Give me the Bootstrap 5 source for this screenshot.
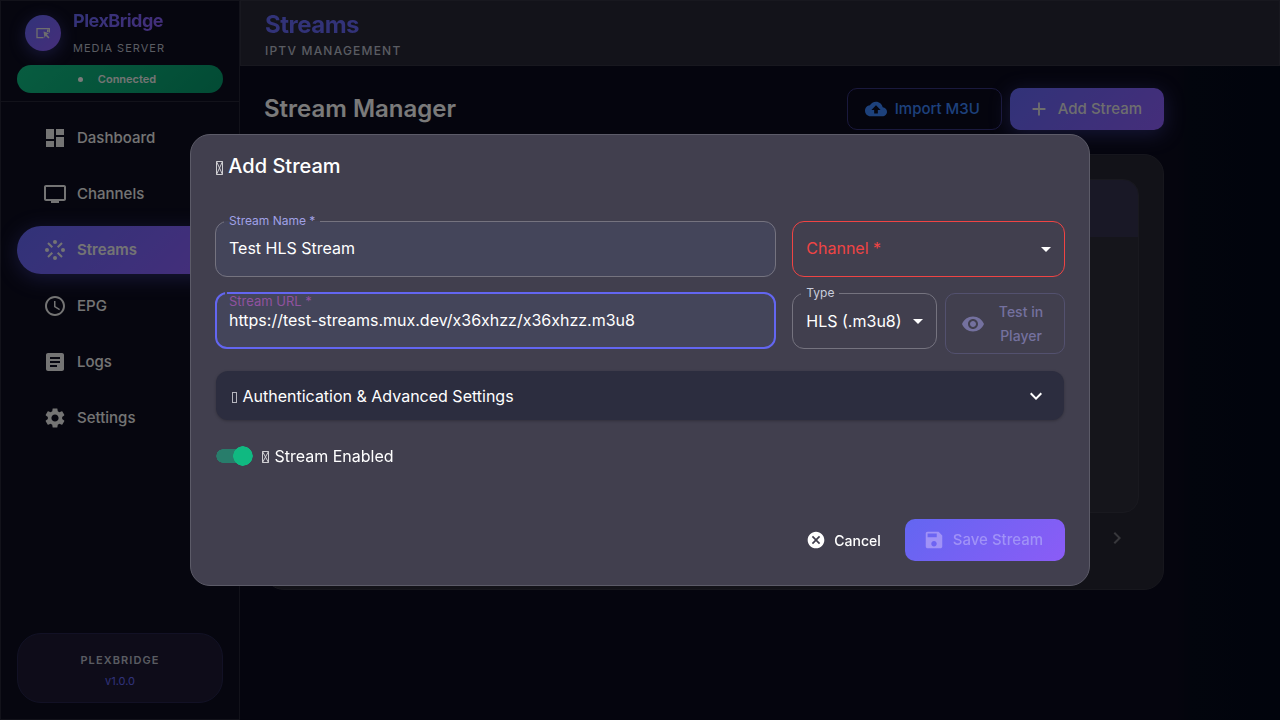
<!DOCTYPE html>
<html lang="en">
<head>
<meta charset="utf-8">
<meta name="viewport" content="width=device-width, initial-scale=1">
<title>PlexBridge – Streams</title>
<link href="https://cdn.jsdelivr.net/npm/bootstrap@5.3.0/dist/css/bootstrap.min.css" rel="stylesheet">
<style>
:root { --pb-indigo: #6366f1; --pb-violet: #8b5cf6; --pb-grad: linear-gradient(135deg, #6366f1 0%, #8b5cf6 100%); --pb-line: rgba(255,255,255,.1); }
body { font-family: Inter, "Liberation Sans", sans-serif; font-size: 16px; line-height: 24px; color: #fff; background: linear-gradient(90deg, #0a0a1c 0%, #0a0a1c 92%, #050a1a 93%, #020819 100%); min-height: 100vh; overflow: hidden; }
svg { fill: currentColor; flex: none; }
.ico { width: 24px; height: 24px; }
.ico-md { width: 22px; height: 22px; }
.ico-sm { width: 20px; height: 20px; }
.glyph-x { width: 8px; height: 14px; fill: none; stroke: currentColor; stroke-width: 1; opacity: .75; vertical-align: -2px; }
.glyph-box { display: inline-block; width: 5px; height: 11px; border: 1px solid #b5b5bd; vertical-align: -1px; margin-right: 1px; }

.side { width: 240px; min-height: 100vh; background: #0c0c1e; border: 1px solid var(--pb-line); }
.brand-box { padding: 8px 16px; border-bottom: 1px solid var(--pb-line); }
.brand-logo { width: 36px; height: 36px; background: var(--pb-grad); box-shadow: 0 4px 16px rgba(99,102,241,.4); color: #ddd; }
.brand-logo svg { width: 16px; height: 16px; }
.brand-name { font-size: 18px; font-weight: 700; line-height: 24px; letter-spacing: -.5px; }
.grad-text { background: var(--pb-grad); -webkit-background-clip: text; background-clip: text; color: transparent; }
.brand-sub { font-size: 11px; font-weight: 400; line-height: 16px; letter-spacing: 1px; color: #b4b8c4; margin-top: 7px; margin-bottom: 1px; }
.state-chip { height: 28px; border-radius: 14px; padding-right: 6px; font-size: 11px; font-weight: 600; background: linear-gradient(135deg, #10b981, #059669); color: #e8e8e8; gap: 15px; }
.state-dot { width: 5px; height: 5px; border-radius: 50%; background: #f4f4f4; }
.side-link { height: 48px; border-radius: 24px; padding: 0 26px; gap: 10px; font-size: 15px; font-weight: 500; color: #e8e8e8; text-decoration: none; }
.side-link.on { background: var(--pb-grad); box-shadow: 0 4px 20px rgba(99,102,241,.4); font-weight: 600; }
.ver-box { height: 70px; border-radius: 24px; padding-top: 5px; background: #1c1933; border: 1px solid #24234a; line-height: 21px; }
.ver-name { font-size: 11px; font-weight: 600; letter-spacing: .1em; color: #b4b8c4; }
.ver-num { font-size: 11px; color: var(--pb-indigo); }

.top-bar { height: 66px; padding: 9px 24px; background: #262634; border: 1px solid #31313f; }
.top-title { font-size: 24px; font-weight: 700; line-height: 30px; letter-spacing: -.5px; background: linear-gradient(135deg, #6366f1, #8b5cf6 1200px); -webkit-background-clip: text; background-clip: text; }
.top-sub { font-size: 12px; font-weight: 500; line-height: 22px; letter-spacing: .1em; color: #b4b8c4; }
.work { max-width: 948px; padding: 22px 24px; }
.work h2 { font-size: 24px; font-weight: 600; color: #f4f4f4; }
.pb-btn { height: 42px; border-radius: 10px; padding: 0 22px 0 18px; gap: 8px; font-size: 15px; font-weight: 500; display: inline-flex; align-items: center; justify-content: center; }
.pb-fill { background: var(--pb-grad); color: #ddd; border: 0; box-shadow: 0 4px 20px rgba(99,102,241,.4); }
.pb-line { border: 1px solid #35327a; color: #3b82f6; padding: 0 21px 0 17px; }
.list-panel { margin-top: 24px; height: 436px; padding: 24px; border-radius: 20px; background: #242430; border: 1px solid #2e2e3a; }
.list-frame { height: 334px; border-radius: 16px; background: #2a2a37; border: 1px solid #33333f; overflow: hidden; }
.list-head { height: 57px; background: #32304c; }
.list-pager { padding: 13px 10px 0; color: #707078; }

.dlg { max-width: 900px; }
.dlg .modal-content { background: #413f4e; border: 1px solid #5c5b68; border-radius: 20px; color: #fff; padding: 0 24px; }
.dlg-title { font-size: 20px; font-weight: 500; line-height: 32px; padding: 15px 0 39px; margin: 0; }
.fld { position: relative; display: flow-root; min-height: 56px; }
.fld fieldset { border: 1px solid #75737f; border-radius: 12px; padding: 0 8px; margin-top: -6px; height: 62px; }
.fld legend { float: none; width: auto; margin: 0; padding: 0 5px; font-size: 12px; line-height: 12px; height: 12px; color: #c8cddc; }
.fld legend label { display: block; }
.fld .tint { background: #44455a; }
.fld .lilac { color: #a0a1e6; }
.fld fieldset.hot { border: 2px solid var(--pb-indigo); padding: 0 8px; }
.fld .hot legend { width: 2px; padding: 0; }
.fld fieldset.bad { border-color: #ef4444; margin-top: 0; height: 56px; }
.fld input, .fld select { position: absolute; inset: 0; width: 100%; height: 56px; padding: 0 14px; background: transparent; border: 0; outline: 0; color: #fff; font-size: 16px; appearance: none; border-radius: 12px; }
.fld input { padding-bottom: 2px; }
.fld .caret { position: absolute; right: 7px; top: 16px; pointer-events: none; }
.fld .over { position: absolute; left: 14px; top: 15px; line-height: 24px; color: #ef4444; pointer-events: none; z-index: 1; }
.fld .moving { font-size: 13px; line-height: 16px; top: 0; color: #90529f; }
.try-btn, .try-btn:disabled { width: 120px; height: 61px; border-radius: 10px; border: 1px solid #53516f; color: #74719f; background: none; font-size: 14px; font-weight: 500; line-height: 24px; padding: 0 15px; gap: 8px; opacity: 1; }
.more-btn { height: 49px; border: 0; border-radius: 12px; background: #2c2d3f; color: #fff; padding: 0 16px; box-shadow: 0 1px 3px rgba(0,0,0,.25); margin: 17px 1px 0; }
.sw { min-height: 24px; padding: 0; margin: 24px 1px 0; gap: 9px; }
.sw input.form-check-input { appearance: none; width: 37px; height: 20px; margin: 0; float: none; border: 0; border-radius: 10px; box-shadow: none; background: radial-gradient(circle at 27px 10px, #10b981 0 9.5px, transparent 10px), linear-gradient(#287d6b, #287d6b) 7px 3px / 23px 14px no-repeat, radial-gradient(circle at 7px 10px, #287d6b 0 6.5px, transparent 7px); }
.dlg-foot { padding: 51px 0 24px; gap: 8px; }
.plain-btn { font-size: 14px; padding: 0 16px; border: 0; color: #fff; }
.save-btn { background: var(--pb-grad); border: 0; color: #a092f7; }
</style>
</head>
<body>
<div class="d-flex">
  <aside class="side d-flex flex-column flex-shrink-0">
    <div class="brand-box">
      <div class="d-flex align-items-center gap-2 px-2">
        <div class="brand-logo rounded-circle d-flex align-items-center justify-content-center me-1">
          <svg viewBox="0 0 16 16"><path d="M8.500 12.700H2V3.700H14.300V7.500" fill="none" stroke="currentColor" stroke-width="1.300"/><path d="M8.500 6.500l5.500 1.800-2.200 1.300 2.700 2.800-1.100 1.100-2.700-2.800-1.100 2.300zM12 4.500h1.500V7H12z"/></svg>
        </div>
        <div><div class="brand-name grad-text">PlexBridge</div><div class="brand-sub">MEDIA SERVER</div></div>
      </div>
      <div class="state-chip d-flex align-items-center justify-content-center mt-2"><span class="state-dot"></span>Connected</div>
    </div>
    <nav class="d-flex flex-column gap-2 px-3 pt-2 mt-1">
      <a class="side-link d-flex align-items-center" href="#"><svg class="ico" viewBox="0 0 24 24"><path d="M3 13h8V3H3v10zm0 8h8v-6H3v6zm10 0h8V11h-8v10zm0-18v6h8V3h-8z"/></svg>Dashboard</a>
      <a class="side-link d-flex align-items-center" href="#"><svg class="ico" viewBox="0 0 24 24"><path d="M21 3H3c-1.100 0-2 .9-2 2v12c0 1.100.9 2 2 2h5v2h8v-2h5c1.100 0 1.990-.9 1.990-2L23 5c0-1.100-.9-2-2-2zm0 14H3V5h18v12z"/></svg>Channels</a>
      <a class="side-link on d-flex align-items-center" href="#" aria-current="page"><svg class="ico" viewBox="0 0 24 24"><circle cx="20" cy="12" r="2"/><circle cx="4" cy="12" r="2"/><circle cx="12" cy="20" r="2"/><circle cx="12" cy="4" r="2"/><path d="M5 5l4.300 4.300M19 5l-4.300 4.300M5 19l4.300-4.300M19 19l-4.300-4.300" stroke="currentColor" stroke-width="2"/></svg>Streams</a>
      <a class="side-link d-flex align-items-center" href="#"><svg class="ico" viewBox="0 0 24 24"><path d="M11.990 2C6.470 2 2 6.480 2 12s4.470 10 9.990 10C17.520 22 22 17.520 22 12S17.520 2 11.990 2zM12 20c-4.420 0-8-3.580-8-8s3.580-8 8-8 8 3.580 8 8-3.580 8-8 8zm.5-13H11v6l5.250 3.150.75-1.230-4.500-2.670z"/></svg>EPG</a>
      <a class="side-link d-flex align-items-center" href="#"><svg class="ico" viewBox="0 0 24 24"><path d="M19 3H5c-1.100 0-2 .9-2 2v14c0 1.100.9 2 2 2h14c1.100 0 2-.9 2-2V5c0-1.100-.9-2-2-2zm-5 14H7v-2h7v2zm3-4H7v-2h10v2zm0-4H7V7h10v2z"/></svg>Logs</a>
      <a class="side-link d-flex align-items-center" href="#"><svg class="ico" viewBox="0 0 24 24"><path d="M19.140 12.940c.04-.3.060-.61.060-.94 0-.32-.02-.64-.07-.94l2.030-1.580c.18-.14.23-.41.12-.61l-1.920-3.320c-.12-.22-.37-.29-.59-.22l-2.390.96c-.5-.38-1.030-.7-1.620-.94l-.36-2.540c-.04-.24-.24-.41-.48-.41h-3.840c-.24 0-.43.17-.47.41l-.36 2.540c-.59.24-1.130.57-1.620.94l-2.390-.96c-.22-.08-.47 0-.59.22L2.740 8.870c-.12.21-.08.47.12.61l2.030 1.580c-.05.3-.09.63-.09.94s.02.64.07.94l-2.030 1.580c-.18.14-.23.41-.12.61l1.920 3.320c.12.22.37.29.59.22l2.390-.96c.5.38 1.030.7 1.620.94l.36 2.540c.05.24.24.41.48.41h3.840c.24 0 .44-.17.47-.41l.36-2.540c.59-.24 1.130-.56 1.620-.94l2.390.96c.22.080.47 0 .59-.22l1.920-3.320c.12-.22.070-.47-.12-.61l-2.010-1.580zM12 15.600c-1.980 0-3.600-1.620-3.600-3.600s1.620-3.600 3.600-3.600 3.600 1.620 3.600 3.600-1.620 3.600-3.600 3.600z"/></svg>Settings</a>
    </nav>
    <div class="ver-box mx-3 mb-3 mt-auto d-flex flex-column align-items-center justify-content-center">
      <div class="ver-name">PLEXBRIDGE</div><div class="ver-num">v1.0.0</div>
    </div>
  </aside>
  <div class="flex-grow-1">
    <header class="top-bar">
      <h1 class="top-title grad-text m-0">Streams</h1>
      <div class="top-sub">IPTV MANAGEMENT</div>
    </header>
    <main class="work">
      <div class="d-flex align-items-center gap-2">
        <h2 class="m-0 me-auto">Stream Manager</h2>
        <button type="button" class="btn pb-btn pb-line"><svg class="ico-md" viewBox="0 0 24 24"><path d="M19.350 10.040C18.670 6.590 15.640 4 12 4 9.110 4 6.600 5.640 5.350 8.040 2.340 8.360 0 10.910 0 14c0 3.310 2.690 6 6 6h13c2.760 0 5-2.240 5-5 0-2.640-2.050-4.780-4.650-4.960zM14 13v4h-4v-4H7l5-5 5 5h-3z"/></svg>Import M3U</button>
        <button type="button" class="btn pb-btn pb-fill"><svg class="ico-md" viewBox="0 0 24 24"><path d="M19 13h-6v6h-2v-6H5v-2h6V5h2v6h6v2z"/></svg>Add Stream</button>
      </div>
      <section class="list-panel">
        <div class="list-frame"><div class="list-head"></div></div>
        <div class="list-pager d-flex justify-content-end"><svg class="ico" viewBox="0 0 24 24"><path d="M10 6 8.590 7.410 13.170 12l-4.580 4.590L10 18l6-6z"/></svg></div>
      </section>
    </main>
  </div>
</div>

<div class="modal-backdrop show"></div>
<div class="modal show d-block" tabindex="-1" role="dialog" aria-labelledby="dlgTitle">
  <div class="modal-dialog modal-dialog-centered dlg">
    <form class="modal-content">
      <h2 class="dlg-title" id="dlgTitle"><svg class="glyph-x" viewBox="0 0 8 14" aria-hidden="true"><path d="M1.500.5h6v13h-6zM1.500.5l6 13M7.500.5l-6 13"/></svg> Add Stream</h2>
      <div class="row g-3">
        <div class="col-8"><div class="fld">
          <fieldset class="tint"><legend><label class="lilac" for="sName">Stream Name *</label></legend></fieldset>
          <input id="sName" type="text" value="Test HLS Stream">
        </div></div>
        <div class="col-4"><div class="fld">
          <fieldset class="bad"></fieldset>
          <label class="over" for="sChan">Channel *</label>
          <select id="sChan"><option value=""></option></select>
          <svg class="caret ico" viewBox="0 0 24 24"><path d="M7 10l5 5 5-5z"/></svg>
        </div></div>
        <div class="col-8"><div class="fld">
          <fieldset class="tint hot"><legend></legend></fieldset>
          <label class="over moving" for="sUrl">Stream URL *</label>
          <input id="sUrl" type="url" value="https://test-streams.mux.dev/x36xhzz/x36xhzz.m3u8">
        </div></div>
        <div class="col-4 d-flex gap-2">
          <div class="fld flex-grow-1">
            <fieldset><legend><label for="sType">Type</label></legend></fieldset>
            <select id="sType"><option>HLS (.m3u8)</option></select>
            <svg class="caret ico" viewBox="0 0 24 24"><path d="M7 10l5 5 5-5z"/></svg>
          </div>
          <button type="button" class="btn try-btn d-flex align-items-center" disabled><svg class="ico" viewBox="0 0 24 24"><path d="M12 4.500C7 4.500 2.730 7.610 1 12c1.730 4.390 6 7.500 11 7.500s9.270-3.110 11-7.500c-1.730-4.390-6-7.500-11-7.500zM12 17c-2.760 0-5-2.240-5-5s2.240-5 5-5 5 2.240 5 5-2.240 5-5 5zm0-8c-1.660 0-3 1.340-3 3s1.340 3 3 3 3-1.340 3-3-1.340-3-3-3z"/></svg><span class="flex-grow-1">Test in Player</span></button>
        </div>
      </div>
      <button type="button" class="more-btn d-flex align-items-center justify-content-between"><span><span class="glyph-box" aria-hidden="true"></span> Authentication &amp; Advanced Settings</span><svg class="ico" viewBox="0 0 24 24"><path d="M16.590 8.590 12 13.170 7.410 8.590 6 10l6 6 6-6z"/></svg></button>
      <div class="form-check sw d-flex align-items-center">
        <input class="form-check-input" type="checkbox" role="switch" id="sOn" checked>
        <label for="sOn"><svg class="glyph-x" viewBox="0 0 8 14" aria-hidden="true"><path d="M.5 1.500h6v11h-6zM.5 1.500l6 11M6.500 1.500l-6 11"/></svg> Stream Enabled</label>
      </div>
      <div class="dlg-foot d-flex justify-content-end">
        <button type="button" class="btn pb-btn plain-btn"><svg class="ico-sm" viewBox="0 0 24 24"><path d="M12 2C6.470 2 2 6.470 2 12s4.470 10 10 10 10-4.470 10-10S17.530 2 12 2zm5 13.590L15.590 17 12 13.410 8.410 17 7 15.590 10.590 12 7 8.410 8.410 7 12 10.590 15.590 7 17 8.410 13.410 12 17 15.590z"/></svg>Cancel</button>
        <button type="button" class="btn pb-btn save-btn"><svg class="ico-md" viewBox="0 0 24 24"><path d="M17 3H5c-1.110 0-2 .9-2 2v14c0 1.100.89 2 2 2h14c1.100 0 2-.9 2-2V7l-4-4zm-5 16c-1.660 0-3-1.340-3-3s1.340-3 3-3 3 1.340 3 3-1.340 3-3 3zm3-10H5V5h10v4z"/></svg>Save Stream</button>
      </div>
    </form>
  </div>
</div>
<script src="https://cdn.jsdelivr.net/npm/bootstrap@5.3.0/dist/js/bootstrap.bundle.min.js"></script>
</body>
</html>
